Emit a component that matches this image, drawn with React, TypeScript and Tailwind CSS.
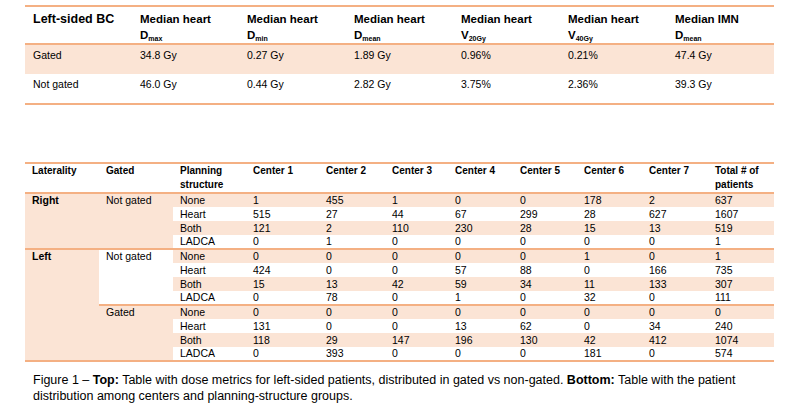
const font = { fontFamily: '"Liberation Sans", Arial, sans-serif' };

const topCols = [
  { t: "Median heart", d: "D", s: "max" },
  { t: "Median heart", d: "D", s: "min" },
  { t: "Median heart", d: "D", s: "mean" },
  { t: "Median heart", d: "V", s: "20Gy" },
  { t: "Median heart", d: "V", s: "40Gy" },
  { t: "Median IMN", d: "D", s: "mean" },
];

const topRows = [
  { label: "Gated", vals: ["34.8 Gy", "0.27 Gy", "1.89 Gy", "0.96%", "0.21%", "47.4 Gy"], shade: true },
  { label: "Not gated", vals: ["46.0 Gy", "0.44 Gy", "2.82 Gy", "3.75%", "2.36%", "39.3 Gy"], shade: false },
];

const widths = ["w-[74px]", "w-[74px]", "w-[73px]", "w-[73px]", "w-[66px]", "w-[63px]", "w-[65px]", "w-[64px]", "w-[65px]", "w-[66px]", "w-[66px]"];

const structs = ["None", "Heart", "Both", "LADCA"];

const groups = [
  {
    lat: "Right",
    gated: "Not gated",
    gatedShade: true,
    rows: [
      ["1", "455", "1", "0", "0", "178", "2", "637"],
      ["515", "27", "44", "67", "299", "28", "627", "1607"],
      ["121", "2", "110", "230", "28", "15", "13", "519"],
      ["0", "1", "0", "0", "0", "0", "0", "1"],
    ],
  },
  {
    lat: "Left",
    gated: "Not gated",
    gatedShade: false,
    rows: [
      ["0", "0", "0", "0", "0", "1", "0", "1"],
      ["424", "0", "0", "57", "88", "0", "166", "735"],
      ["15", "13", "42", "59", "34", "11", "133", "307"],
      ["0", "78", "0", "1", "0", "32", "0", "111"],
    ],
  },
  {
    lat: "",
    gated: "Gated",
    gatedShade: true,
    rows: [
      ["0", "0", "0", "0", "0", "0", "0", "0"],
      ["131", "0", "0", "13", "62", "0", "34", "240"],
      ["118", "29", "147", "196", "130", "42", "412", "1074"],
      ["0", "393", "0", "0", "0", "181", "0", "574"],
    ],
  },
];

function TopTable() {
  return (
    <table className="ml-[25px] mt-[5px] w-[749px] table-fixed border-collapse text-black">
      <thead>
        <tr className="border-t-2 border-b-2 border-[#f4b083] align-top">
          <th className="h-[36px] w-[107px] pl-[8px] pt-[4px] text-left text-[12.5px] font-bold leading-[17px]">Left-sided BC</th>
          {topCols.map((c, i) => (
            <th key={i} className="w-[107px] pl-[8px] pt-[4px] text-left text-[11.5px] font-bold leading-[17px]">
              <div>{c.t}</div>
              <div className="text-[11.5px] leading-[15px]">
                {c.d}
                <sub className="text-[7px] font-bold">{c.s}</sub>
              </div>
            </th>
          ))}
        </tr>
      </thead>
      <tbody>
        {topRows.map((r, i) => (
          <tr key={i} className={`align-top ${r.shade ? "bg-[#fbe4d5]" : ""} ${i === 1 ? "border-b-2 border-[#f4b083]" : ""}`}>
            <td className="h-[30px] pl-[8px] pt-[3px] text-[10.5px] leading-[14px]">{r.label}</td>
            {r.vals.map((v, j) => (
              <td key={j} className="pl-[8px] pt-[3px] text-[10.5px] leading-[14px]">{v}</td>
            ))}
          </tr>
        ))}
      </tbody>
    </table>
  );
}

function BottomTable() {
  const heads = ["Laterality", "Gated", "Planning structure", "Center 1", "Center 2", "Center 3", "Center 4", "Center 5", "Center 6", "Center 7", "Total # of patients"];
  return (
    <table className="ml-[25px] mt-[57px] w-[749px] table-fixed border-collapse text-black">
      <thead>
        <tr className="border-t-2 border-b-2 border-[#f4b083] align-top">
          {heads.map((h, i) => (
            <th key={i} className={`${widths[i]} h-[29px] pl-[7px] pt-0 text-left text-[10px] font-bold leading-[14px]`}>{h}</th>
          ))}
        </tr>
      </thead>
      <tbody>
        {groups.map((g, gi) =>
          g.rows.map((r, ri) => {
            const shade = ri % 2 === 0;
            const rowCls = shade ? "bg-[#fbe4d5]" : "";
            const sep = ri === 0 && gi > 0 ? "border-t-2 border-[#f4b083]" : "";
            const last = gi === 2 && ri === 3 ? "border-b-2 border-[#f4b083]" : "";
            return (
              <tr key={`${gi}-${ri}`} className="h-[14px] text-[10.5px] leading-[13px]">
                {gi !== 2 && ri === 0 && (
                  <td rowSpan={gi === 1 ? 8 : 4} className={`bg-[#fbe4d5] pl-[7px] align-top font-bold ${sep} ${gi === 1 ? "border-b-2 border-[#f4b083]" : ""}`}>{g.lat}</td>
                )}
                {ri === 0 && (
                  <td rowSpan={4} className={`${g.gatedShade ? "bg-[#fbe4d5]" : ""} pl-[7px] align-top ${sep} ${gi === 2 ? "border-b-2 border-[#f4b083]" : ""}`}>{g.gated}</td>
                )}
                <td className={`${rowCls} ${sep} ${last} pl-[7px]`}>{structs[ri]}</td>
                {r.map((v, j) => (
                  <td key={j} className={`${rowCls} ${sep} ${last} pl-[7px]`}>{v}</td>
                ))}
              </tr>
            );
          })
        )}
      </tbody>
    </table>
  );
}

export default function App() {
  return (
    <div className="h-[414px] w-[799px] overflow-hidden bg-white" style={font}>
      <TopTable />
      <BottomTable />
      <p className="ml-[33px] mt-[10px] w-[712px] text-[12.5px] leading-[16px] text-black">
        Figure 1 – <b>Top:</b> Table with dose metrics for left-sided patients, distributed in gated vs non-gated. <b>Bottom:</b> Table with the patient distribution among centers and planning-structure groups.
      </p>
    </div>
  );
}
